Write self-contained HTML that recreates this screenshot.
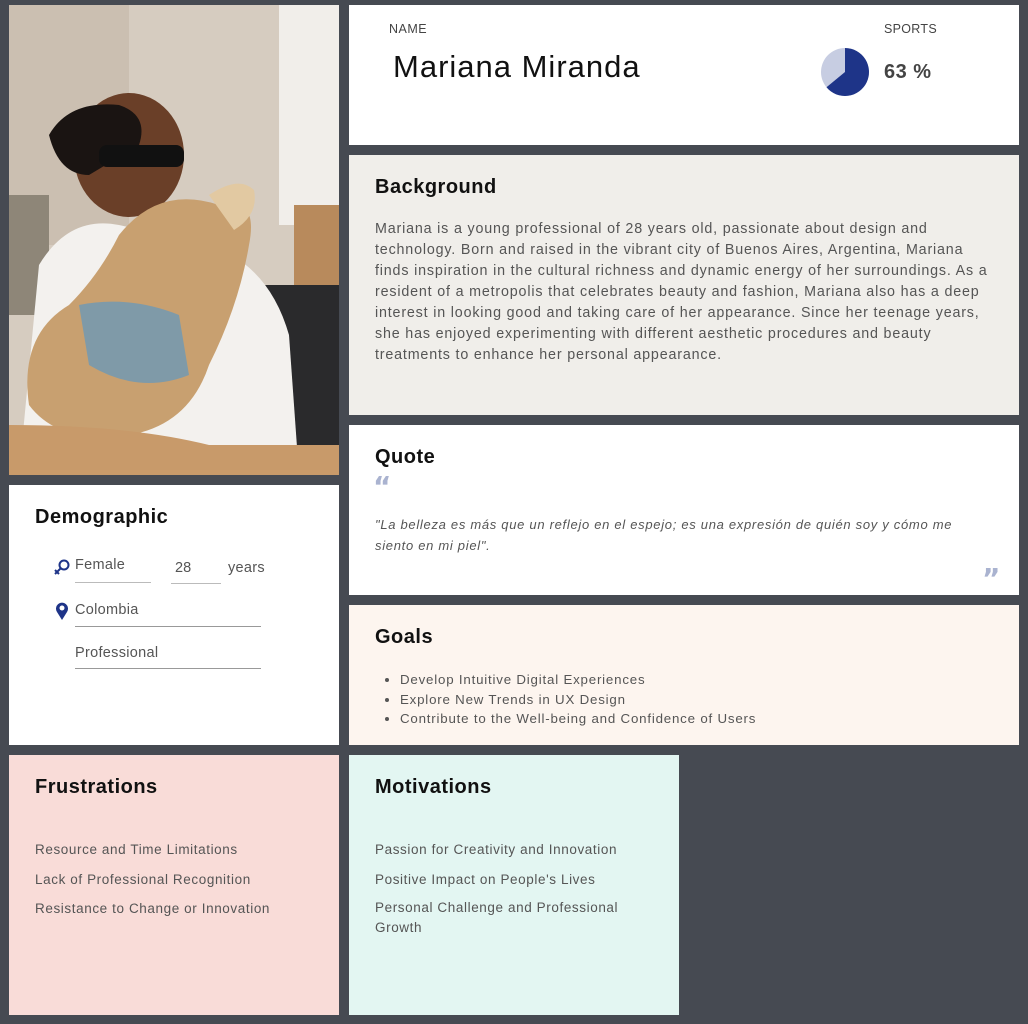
<!DOCTYPE html>
<html><head><meta charset="utf-8"><style>
*{margin:0;padding:0;box-sizing:border-box}
body{width:1028px;height:1024px;background:#464a52;position:relative;overflow:hidden;font-family:"Liberation Sans",sans-serif;color:#555}
.c{position:absolute}
h2{font-size:20px;font-weight:bold;color:#111;letter-spacing:.5px}
.sm{font-size:13.5px;color:#555;letter-spacing:.6px}
.nw{white-space:nowrap}
</style></head><body>
<div class="c" style="left:9px;top:5px;width:330px;height:470px;overflow:hidden;background:#d8cfc4">
<svg width="330" height="470" viewBox="0 0 330 470">
<rect width="330" height="470" fill="#d6ccc0"/>
<rect x="0" y="0" width="120" height="240" fill="#cbbfb1"/>
<rect x="270" y="0" width="60" height="220" fill="#f1eeea"/>
<rect x="285" y="200" width="45" height="100" fill="#b88a5c"/>
<rect x="250" y="280" width="80" height="190" fill="#2a2a2c"/>
<rect x="0" y="190" width="40" height="120" fill="#8e8678"/>
<path d="M30 260 Q60 210 110 220 L200 240 Q260 260 280 330 L290 470 L10 470 Z" fill="#f3f1ee"/>
<ellipse cx="120" cy="150" rx="55" ry="62" fill="#6a3f28"/>
<path d="M40 130 Q60 95 110 100 Q140 110 130 140 L80 170 Q50 170 40 130Z" fill="#1a1412"/>
<rect x="90" y="140" width="85" height="22" rx="8" fill="#111"/>
<path d="M110 230 Q150 180 210 200 Q250 190 240 240 Q230 300 200 360 Q180 420 120 430 Q50 440 20 400 Q10 330 60 300 Q90 270 110 230Z" fill="#c8a070"/>
<path d="M200 190 Q230 170 245 185 Q250 210 225 225 Z" fill="#e2c9a2"/>
<path d="M70 300 Q120 290 170 310 L180 370 Q130 390 80 360 Z" fill="#7f9aa8"/>
<path d="M0 420 Q120 420 200 440 L330 440 L330 470 L0 470Z" fill="#c89a6a"/>
</svg></div>

<div class="c" style="left:349px;top:5px;width:670px;height:140px;background:#fff">
<div class="c" style="left:40px;top:17px;font-size:12.5px;color:#444;letter-spacing:.5px">NAME</div>
<div class="c nw" style="left:44px;top:44px;font-size:31px;color:#111;letter-spacing:1px">Mariana Miranda</div>
<div class="c" style="left:535px;top:17px;font-size:12.5px;color:#444;letter-spacing:.3px">SPORTS</div>
<svg class="c" style="left:472px;top:43px" width="48" height="48" viewBox="0 0 48 48"><circle cx="24" cy="24" r="24" fill="#c7cde2"/><path d="M24 24 L24 0 A24 24 0 1 1 5.5 39.3 Z" fill="#1e3488"/></svg>
<div class="c nw" style="left:535px;top:56px;font-size:20px;font-weight:bold;color:#444;letter-spacing:.5px">63 %</div>
</div>

<div class="c" style="left:349px;top:155px;width:670px;height:260px;background:#f0eeea">
<h2 class="c" style="left:26px;top:21px">Background</h2>
<div class="c nw" style="left:26px;top:64px;font-size:14.3px;line-height:21px;color:#555;letter-spacing:.82px">Mariana is a young professional of 28 years old, passionate about design and<br>technology. Born and raised in the vibrant city of Buenos Aires, Argentina, Mariana<br>finds inspiration in the cultural richness and dynamic energy of her surroundings. As a<br>resident of a metropolis that celebrates beauty and fashion, Mariana also has a deep<br>interest in looking good and taking care of her appearance. Since her teenage years,<br>she has enjoyed experimenting with different aesthetic procedures and beauty<br>treatments to enhance her personal appearance.</div>
</div>

<div class="c" style="left:349px;top:425px;width:670px;height:170px;background:#fff">
<h2 class="c" style="left:26px;top:21px">Quote</h2>
<div class="c" style="left:24px;top:46px;font-size:28px;font-weight:bold;color:#aab3d0;font-family:'DejaVu Sans',sans-serif;line-height:32px">“</div>
<div class="c nw" style="left:26px;top:89px;font-size:13px;line-height:21px;font-style:italic;color:#555;letter-spacing:.7px">"La belleza es más que un reflejo en el espejo; es una expresión de quién soy y cómo me<br>siento en mi piel".</div>
<div class="c" style="left:633px;top:138px;font-size:28px;font-weight:bold;color:#aab3d0;font-family:'DejaVu Sans',sans-serif;line-height:32px">”</div>
</div>

<div class="c" style="left:349px;top:605px;width:670px;height:140px;background:#fdf5ef">
<h2 class="c" style="left:26px;top:21px">Goals</h2>
<ul class="c nw" style="left:51px;top:65px;font-size:13.3px;line-height:19.5px;color:#555;letter-spacing:.8px">
<li>Develop Intuitive Digital Experiences</li><li>Explore New Trends in UX Design</li><li>Contribute to the Well-being and Confidence of Users</li></ul>
</div>

<div class="c" style="left:9px;top:485px;width:330px;height:260px;background:#fff">
<h2 class="c" style="left:26px;top:21px">Demographic</h2>
<svg class="c" style="left:44px;top:73px" width="18" height="18" viewBox="0 0 18 18"><circle cx="11" cy="7" r="4.5" fill="none" stroke="#1e3488" stroke-width="2"/><path d="M8 10 L2 16 M2 12 L6 16" stroke="#1e3488" stroke-width="2"/></svg>
<div class="c" style="left:66px;top:72px;width:76px;height:26px;border-bottom:1px solid #bbb;font-size:14.5px;letter-spacing:.3px">Female</div>
<div class="c" style="left:162px;top:75px;width:50px;height:24px;border-bottom:1px solid #bbb;font-size:14.5px;padding-left:4px">28</div>
<div class="c" style="left:219px;top:75px;font-size:14.5px;letter-spacing:.3px">years</div>
<svg class="c" style="left:46px;top:117px" width="14" height="18" viewBox="0 0 14 18"><path d="M7 18 L2 10 A6 6 0 1 1 12 10 Z" fill="#1e3488"/><circle cx="7" cy="6" r="2.5" fill="#fff"/></svg>
<div class="c" style="left:66px;top:117px;width:186px;height:25px;border-bottom:1px solid #999;font-size:14.5px;letter-spacing:.3px">Colombia</div>
<div class="c" style="left:66px;top:160px;width:186px;height:24px;border-bottom:1px solid #999;font-size:14.5px;letter-spacing:.3px">Professional</div>
</div>

<div class="c" style="left:9px;top:755px;width:330px;height:260px;background:#f9dcd8">
<h2 class="c" style="left:26px;top:21px">Frustrations</h2>
<div class="c sm nw" style="left:26px;top:80px;line-height:29.5px">Resource and Time Limitations<br>Lack of Professional Recognition<br>Resistance to Change or Innovation</div>
</div>

<div class="c" style="left:349px;top:755px;width:330px;height:260px;background:#e3f6f2">
<h2 class="c" style="left:26px;top:21px">Motivations</h2>
<div class="c sm nw" style="left:26px;top:80px;line-height:29.5px">Passion for Creativity and Innovation<br>Positive Impact on People's Lives</div>
<div class="c sm nw" style="left:26px;top:143px;line-height:20px">Personal Challenge and Professional<br>Growth</div>
</div>
</body></html>
